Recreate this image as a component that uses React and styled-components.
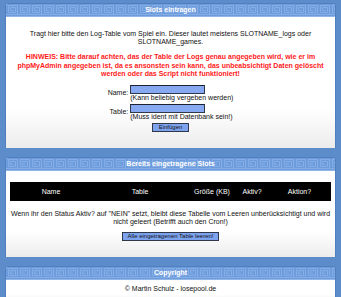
import React from 'react';
import styled, { createGlobalStyle } from 'styled-components';

const GlobalStyle = createGlobalStyle`
  html, body {
    margin: 0;
    padding: 0;
    background: #5d8cca;
  }
  body {
    font-family: "Liberation Sans", Arial, sans-serif;
    font-size: 7px;
    color: #111;
  }
`;

const Page = styled.div`
  display: flex;
  flex-direction: column;
  gap: 9px;
  padding: 3px 5px 0 5px;
  min-height: 297px;
  box-sizing: border-box;
`;

const Panel = styled.section`
  background: #fff;
  border: 1px solid #4f7fbe;
  border-bottom: none;
  border-radius: 3px 3px 0 0;
  overflow: hidden;
`;

const HeaderBar = styled.div`
  position: relative;
  height: 12px;
  background: #6d9cdc;
  border-bottom: 1px solid #93b6e8;
`;

const HeaderPattern = styled.svg`
  position: absolute;
  inset: 0;
  width: 100%;
  height: 100%;
`;

const HeaderTitle = styled.h2`
  position: relative;
  margin: 0;
  font-size: 7px;
  line-height: 12px;
  font-weight: bold;
  color: #fff;
  text-align: center;
`;

const Body = styled.div`
  background: linear-gradient(#fff 70%, #ececec);
  padding: ${(p) => p.$pad || '0'};
  text-align: center;
`;

const Text = styled.p`
  margin: 0 0 ${(p) => p.$gap || 0}px;
  line-height: ${(p) => (p.$warn ? 8.5 : 8)}px;
  color: ${(p) => (p.$warn ? '#ff1a1a' : '#111')};
  font-weight: ${(p) => (p.$warn ? 'bold' : 'normal')};
`;

const FormTable = styled.table`
  margin: 0 auto;
  border-collapse: collapse;
  td {
    padding: 1px 1px;
    text-align: left;
    line-height: 8px;
  }
  td.label {
    text-align: right;
    vertical-align: middle;
  }
  td.submit {
    text-align: center;
  }
`;

const Input = styled.input`
  display: block;
  width: 75px;
  height: 9px;
  box-sizing: border-box;
  margin: 0;
  padding: 0;
  background: #86a9f2;
  border: 1px solid #2f3848;
  border-top-color: #1c2230;
`;

const Button = styled.button`
  height: 9px;
  padding: 0 ${(p) => p.$px || 6}px;
  box-sizing: border-box;
  font-family: "Liberation Sans", Arial, sans-serif;
  font-size: 6px;
  line-height: 7px;
  color: #111;
  background: #7ea3ee;
  border: 1px solid #2f3848;
  cursor: pointer;
`;

const SlotGrid = styled.div`
  display: grid;
  grid-template-columns: 82px 96px 48px 32px 1fr;
  background: #000;
  color: #fff;
  margin: 0 4px 9px 4px;
  height: 19px;
  align-items: center;
  text-align: center;
`;

const Pattern = () => (
  <HeaderPattern aria-hidden="true">
    <defs>
      <pattern id="key" width="12" height="12" patternUnits="userSpaceOnUse">
        <path
          d="M0 10.5H11.5V1.5H2.5V8.5H9.5V3.5H4.5V6.5H7"
          fill="none"
          stroke="#86ade6"
          strokeWidth="1"
        />
      </pattern>
    </defs>
    <rect width="100%" height="100%" fill="url(#key)" />
  </HeaderPattern>
);

const Header = ({ children }) => (
  <HeaderBar>
    <Pattern />
    <HeaderTitle>{children}</HeaderTitle>
  </HeaderBar>
);

const App = () => (
  <>
    <GlobalStyle />
    <Page>
      <Panel>
        <Header>Slots eintragen</Header>
        <Body $pad="13px 10px 15px">
          <Text $gap={7}>
            Tragt hier bitte den Log-Table vom Spiel ein. Dieser lautet meistens SLOTNAME_logs oder
            SLOTNAME_games.
          </Text>
          <Text $warn $gap={5}>
            HINWEIS: Bitte darauf achten, das der Table der Logs genau angegeben wird, wie er im
            phpMyAdmin angegeben ist, da es ansonsten sein kann, das unbeabsichtigt Daten gelöscht
            werden oder das Script nicht funktioniert!
          </Text>
          <FormTable>
            <tbody>
              <tr>
                <td className="label">Name:</td>
                <td>
                  <Input type="text" />
                  (Kann beliebig vergeben werden)
                </td>
              </tr>
              <tr>
                <td className="label">Table:</td>
                <td>
                  <Input type="text" />
                  (Muss ident mit Datenbank sein!)
                </td>
              </tr>
              <tr>
                <td className="submit" colSpan={2}>
                  <Button type="button">Einfügen</Button>
                </td>
              </tr>
            </tbody>
          </FormTable>
        </Body>
      </Panel>

      <Panel>
        <Header>Bereits eingetragene Slots</Header>
        <Body $pad="11px 0 16px">
          <SlotGrid>
            <span>Name</span>
            <span>Table</span>
            <span>Größe (KB)</span>
            <span>Aktiv?</span>
            <span>Aktion?</span>
          </SlotGrid>
          <Text $gap={6}>
            Wenn ihr den Status Aktiv? auf "NEIN" setzt, bleibt diese Tabelle vom Leeren unberücksichtigt und wird
            nicht geleert (Betrifft auch den Cron!)
          </Text>
          <Button type="button" $px={5}>Alle eingetragenen Table leeren!</Button>
        </Body>
      </Panel>

      <Panel>
        <Header>Copyright</Header>
        <Body $pad="5px 0 8px">
          <Text>© Martin Schulz - losepool.de</Text>
        </Body>
      </Panel>
    </Page>
  </>
);

export default App;
